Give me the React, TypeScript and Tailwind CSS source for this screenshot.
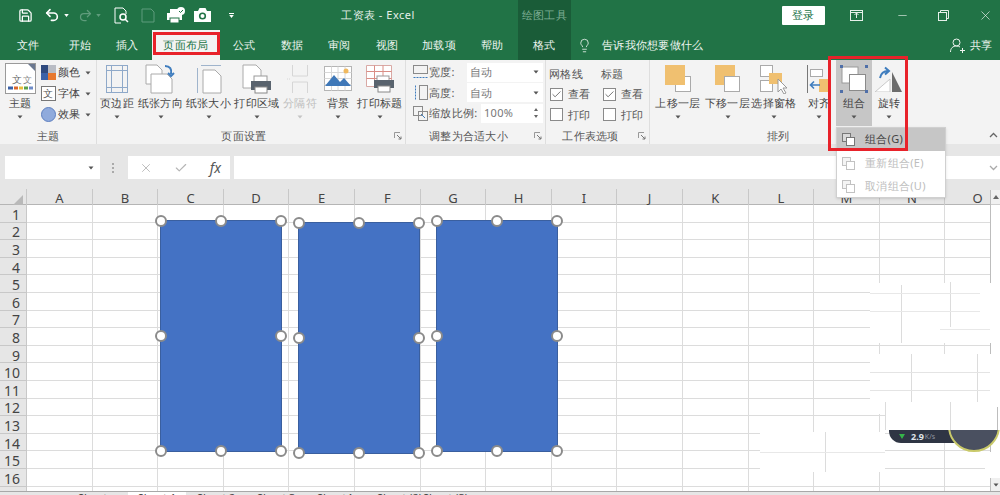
import type { ReactNode } from "react";
import { Save, Undo2, Redo2, Lightbulb, X, Minus, Check } from "lucide-react";

const font = "[font-family:'Noto_Sans_CJK_SC','Liberation_Sans',sans-serif]";
const cols = ["A", "B", "C", "D", "E", "F", "G", "H", "I", "J", "K", "L", "M", "N", "O"];
const rows = Array.from({ length: 17 }, (_, i) => i + 1);

function Caret({ dim = false }: { dim?: boolean }) {
  return (
    <svg width="6" height="4" viewBox="0 0 6 4" className="shrink-0">
      <path d="M0.5 0.5h5L3 3.5z" fill={dim ? "#c4c4c4" : "#555"} />
    </svg>
  );
}

function Launcher() {
  return (
    <svg width="8" height="8" viewBox="0 0 8 8" className="absolute right-[3px] bottom-[4px]">
      <path d="M0.5 6V0.5H6" fill="none" stroke="#999" />
      <path d="M3 3l4 4M7 4.5V7H4.5" fill="none" stroke="#777" />
    </svg>
  );
}

function BigButton({ icon, label, w, dim = false, className = "" }: { icon: ReactNode; label: string; w: string; dim?: boolean; className?: string }) {
  return (
    <div className={"flex flex-col items-center shrink-0 " + w + " " + className}>
      <div className="h-[33px] mt-[2px] flex items-center justify-center">{icon}</div>
      <div className={"h-[16px] leading-[16px] text-[11px] tracking-[0.3px] whitespace-nowrap " + (dim ? "text-[#bdbdbd]" : "text-[#444]")}>{label}</div>
      <div className="mt-[3px] h-[6px] flex items-center"><Caret dim={dim} /></div>
    </div>
  );
}

function Group({ w, label, launcher = false, children }: { w: string; label: string; launcher?: boolean; children: ReactNode }) {
  return (
    <div className={"relative flex flex-col shrink-0 border-r border-[#dedede] " + w}>
      <div className="flex h-[66px]">{children}</div>
      <div className={"flex-1 flex items-center justify-center text-[11px] tracking-[0.3px] text-[#555] leading-none " + (launcher ? "pr-[14px]" : "")}>{label}</div>
      {launcher && <Launcher />}
    </div>
  );
}

function ThemeIcon() {
  return (
    <svg width="31" height="31" viewBox="0 0 31 31">
      <rect x="0.5" y="0.5" width="30" height="30" fill="#fff" stroke="#9a9a9a" />
      <path d="M23 1h7v7z" fill="#6b7890" />
      <text x="7" y="20" fontSize="10" fill="#666">文</text>
      <text x="18" y="20" fontSize="9" fill="#888">文</text>
      <path d="M3 25h5" stroke="#3c62a8" strokeWidth="3" />
      <path d="M9 25h4" stroke="#d9662a" strokeWidth="3" />
      <path d="M14 25h4" stroke="#e8bf3f" strokeWidth="3" />
      <path d="M19 25h4" stroke="#5aa04a" strokeWidth="3" />
      <path d="M24 25h4" stroke="#6e8cc8" strokeWidth="3" />
    </svg>
  );
}

function SmallTheme({ icon, label }: { icon: ReactNode; label: string }) {
  return (
    <div className="h-[21px] flex items-center">
      <div className="w-[16px] h-[16px] flex items-center justify-center">{icon}</div>
      <span className="ml-[2px] text-[11px] tracking-[0.3px] text-[#444] w-[27px]">{label}</span>
      <Caret />
    </div>
  );
}

function MarginIcon() {
  return (
    <svg width="24" height="28" viewBox="0 0 24 28" fill="none" stroke="#8fa9c9">
      <rect x="1.5" y="0.5" width="21" height="27" />
      <path d="M6.5 0.5v27M17.5 0.5v27M1.5 5.5h21M1.5 22.5h21" />
    </svg>
  );
}

function OrientIcon() {
  return (
    <svg width="32" height="30" viewBox="0 0 32 30">
      <path d="M1 1h11l5 5v14H1z" fill="#fff" stroke="#aaa" />
      <path d="M6 10h16l5 5v14H6z" fill="#fff" stroke="#aaa" />
      <path d="M20 2c5 0 7 3 6 8M23 9l3 3 3-3" fill="none" stroke="#3f7dbe" strokeWidth="2" />
    </svg>
  );
}

function SizeIcon() {
  return (
    <svg width="28" height="30" viewBox="0 0 28 30" fill="none">
      <path d="M8 6h12l6 6v17H8z" fill="#fff" stroke="#aaa" />
      <path d="M2.5 4v25M6 1.5h20" stroke="#9fb4cc" />
    </svg>
  );
}

function PrintAreaIcon() {
  return (
    <svg width="30" height="30" viewBox="0 0 30 30">
      <path d="M1 1h13l5 5v18H1z" fill="#fff" stroke="#aaa" />
      <rect x="12" y="12" width="13" height="6" fill="#fff" stroke="#999" />
      <rect x="9" y="17" width="20" height="9" fill="#59636e" />
      <rect x="13" y="23" width="12" height="6" fill="#fff" stroke="#888" />
    </svg>
  );
}

function BreakIcon() {
  return (
    <svg width="26" height="30" viewBox="0 0 26 30" fill="none" stroke="#d6d6d6">
      <path d="M5.5 1v11M20.5 1v11M5.5 18v11M20.5 18v11M5.5 12h15M5.5 18h15" />
      <path d="M0 15h3" strokeDasharray="1 1" />
    </svg>
  );
}

function BackgroundIcon() {
  return (
    <svg width="28" height="25" viewBox="0 0 28 25">
      <rect x="0.5" y="0.5" width="27" height="24" fill="#fff" stroke="#b5b5b5" />
      <path d="M0.5 6.5h27M0.5 12.5h27M0.5 18.5h27M7.5 0.5v24M14 0.5v24M21 0.5v24" stroke="#d8d8d8" />
      <circle cx="22" cy="5" r="2.5" fill="#f0b95f" />
      <path d="M1 20l9-11 6 7 4-4 7 8z" fill="#3f78b8" />
    </svg>
  );
}

function PrintTitleIcon() {
  return (
    <svg width="28" height="28" viewBox="0 0 28 28">
      <path d="M0.5 0.5h25v21h-25z" fill="#fff" stroke="#d9a9a5" />
      <path d="M0.5 6.5h25M0.5 13.5h25M8.5 0.5v21M17 0.5v21" stroke="#d98e86" />
      <rect x="11" y="11" width="12" height="6" fill="#fff" stroke="#999" />
      <rect x="8" y="15" width="20" height="8" fill="#59636e" />
      <rect x="12" y="21" width="12" height="6" fill="#fff" stroke="#888" />
    </svg>
  );
}

function ForwardIcon({ top }: { top: "orange" | "white" }) {
  return (
    <svg width="26" height="28" viewBox="0 0 26 28">
      {top === "orange" ? (
        <>
          <rect x="10.5" y="11.5" width="15" height="15" fill="#fff" stroke="#aaa" />
          <rect x="0" y="0" width="20" height="20" fill="#f0c070" />
        </>
      ) : (
        <>
          <rect x="0" y="0" width="20" height="20" fill="#f0c070" />
          <rect x="9.5" y="11.5" width="15" height="15" fill="#fff" stroke="#aaa" />
        </>
      )}
    </svg>
  );
}

function PaneIcon() {
  return (
    <svg width="28" height="30" viewBox="0 0 28 30">
      <rect x="0.5" y="1.5" width="12" height="11" fill="#fff" stroke="#aaa" />
      <rect x="0.5" y="16.5" width="12" height="11" fill="#fff" stroke="#aaa" />
      <rect x="9" y="9" width="13" height="11" fill="#f0c070" />
      <path d="M18 15v13l3-3 3 5 2-1-3-5h4z" fill="#fff" stroke="#999" />
    </svg>
  );
}

function AlignIcon() {
  return (
    <svg width="26" height="28" viewBox="0 0 26 28">
      <path d="M1.5 0v28" stroke="#777" />
      <rect x="4.5" y="4.5" width="12" height="7" fill="#fff" stroke="#aaa" />
      <rect x="13" y="14" width="12" height="13" fill="#f0c070" />
      <path d="M14 20H5M8 16.5L4.5 20 8 23.5" fill="none" stroke="#3f7dbe" strokeWidth="1.6" />
    </svg>
  );
}

function GroupIcon() {
  return (
    <svg width="28" height="28" viewBox="0 0 28 28">
      <rect x="2" y="2" width="16" height="16" fill="#fff" stroke="#9a9a9a" />
      <rect x="9.5" y="9.5" width="16" height="16" fill="#fff" stroke="#8a8a8a" />
      <g fill="#4f6fa8">
        <rect x="0" y="0" width="3" height="3" />
        <rect x="25" y="0" width="3" height="3" />
        <rect x="0" y="25" width="3" height="3" />
        <rect x="25" y="25" width="3" height="3" />
      </g>
    </svg>
  );
}

function RotateIcon() {
  return (
    <svg width="28" height="27" viewBox="0 0 28 27">
      <path d="M17 7v20h10z" fill="#6c6c6c" />
      <path d="M0 27l15-13v13z" fill="#fff" stroke="#c9c9c9" />
      <path d="M5 13c1-5 4-7 8-7M10 2.5L14 6l-4 3.5" fill="none" stroke="#3f7dbe" strokeWidth="2" />
    </svg>
  );
}

function SizeRow({ icon, label, value, spin = false, labelW, fieldW }: { icon: ReactNode; label: string; value: string; spin?: boolean; labelW: string; fieldW: string }) {
  return (
    <div className="h-[20.5px] flex items-center pl-[6px]">
      <div className="w-[16px] h-[16px] flex items-center justify-center shrink-0">{icon}</div>
      <span className={"ml-[1px] text-[11px] tracking-[0.3px] text-[#555] whitespace-nowrap " + labelW}>{label}</span>
      <div className={"h-[19px] bg-white flex items-center justify-between pl-[3px] pr-[4px] text-[11px] tracking-[0.3px] text-[#777] " + fieldW}>
        <span>{value}</span>
        {spin ? (
          <svg width="6" height="12" viewBox="0 0 6 12"><path d="M3 1l2 3H1zM3 11L1 8h4z" fill="#666" /></svg>
        ) : (
          <Caret />
        )}
      </div>
    </div>
  );
}

function CheckRow({ label, on }: { label: string; on: boolean }) {
  return (
    <div className="h-[20.5px] flex items-center">
      <div className="w-[13px] h-[13px] bg-white border border-[#8a8a8a] flex items-center justify-center">
        {on && <Check size={11} strokeWidth={1.6} color="#444" />}
      </div>
      <span className="ml-[5px] text-[11px] tracking-[0.3px] text-[#555]">{label}</span>
    </div>
  );
}

function Handle({ pos }: { pos: string }) {
  return <div className={"absolute w-[12px] h-[12px] rounded-full bg-white border-2 border-[#8b8b8b] " + pos} />;
}

function Shape({ pos }: { pos: string }) {
  return (
    <div className={"absolute w-[122px] h-[232px] bg-[#4472c4] border border-[#3a5f9f] " + pos}>
      <Handle pos="-left-[6px] -top-[6px]" />
      <Handle pos="left-[54px] -top-[6px]" />
      <Handle pos="-right-[6px] -top-[6px]" />
      <Handle pos="-left-[6px] top-[109px]" />
      <Handle pos="-right-[6px] top-[109px]" />
      <Handle pos="-left-[6px] -bottom-[6px]" />
      <Handle pos="left-[54px] -bottom-[6px]" />
      <Handle pos="-right-[6px] -bottom-[6px]" />
    </div>
  );
}

function MenuIcon({ dim = false }: { dim?: boolean }) {
  const c = dim ? "#c2c2c2" : "#777";
  return (
    <svg width="15" height="15" viewBox="0 0 15 15" fill="none" stroke={c}>
      <rect x="1.5" y="1.5" width="8" height="8" fill={dim ? "#f4f4f4" : "#d8d8d8"} />
      <rect x="5.5" y="5.5" width="8" height="8" fill="#fff" />
    </svg>
  );
}

export default function App() {
  return (
    <div className={"relative w-[1000px] h-[495px] overflow-hidden bg-white flex flex-col " + font}>
      {/* title bar */}
      <div className="h-[30px] bg-[#217346] flex items-center text-white shrink-0">
        <Save size={15} strokeWidth={2} className="ml-[18px]" />
        <Undo2 size={16} strokeWidth={2.4} className="ml-[11px]" />
        <div className="ml-[4px]"><svg width="5" height="3" viewBox="0 0 6 4"><path d="M0 0h6L3 4z" fill="#fff" /></svg></div>
        <Redo2 size={15} strokeWidth={2} color="#5f9c7c" className="ml-[9px]" />
        <div className="ml-[3px]"><svg width="5" height="3" viewBox="0 0 6 4"><path d="M0 0h6L3 4z" fill="#5f9c7c" /></svg></div>
        <svg width="15" height="17" viewBox="0 0 15 17" fill="none" stroke="#fff" className="ml-[13px]">
          <path d="M1 1h8l3 3v3M1 1v15h6" />
          <circle cx="9" cy="10" r="3" strokeWidth="1.5" />
          <path d="M11 12l3 3" strokeWidth="1.5" />
        </svg>
        <svg width="14" height="16" viewBox="0 0 14 16" fill="none" stroke="#5f9c7c" className="ml-[12px]">
          <path d="M1 2h9l3 3v10H1z" />
        </svg>
        <svg width="18" height="16" viewBox="0 0 18 16" className="ml-[12px]">
          <rect x="0" y="6" width="15" height="7" fill="#fff" />
          <rect x="3" y="2" width="8" height="4" fill="#fff" />
          <rect x="3" y="11" width="9" height="5" fill="#fff" stroke="#217346" />
          <circle cx="14" cy="4" r="4" fill="#fff" />
          <path d="M12 4l1.5 1.5L16 3" fill="none" stroke="#217346" />
        </svg>
        <svg width="17" height="14" viewBox="0 0 17 14" className="ml-[9px]">
          <path d="M0 3h4l1.5-3h6L13 3h4v11H0z" fill="#fff" />
          <circle cx="8.5" cy="8" r="3.6" fill="#217346" />
          <circle cx="8.5" cy="8" r="2" fill="#fff" />
        </svg>
        <div className="ml-[18px] flex flex-col items-center gap-[1px]">
          <div className="w-[5px] h-[1px] bg-white" />
          <svg width="5" height="3" viewBox="0 0 6 4"><path d="M0 0h6L3 4z" fill="#fff" /></svg>
        </div>
        <span className="ml-[107px] w-[79px] text-[11px] tracking-[0.5px] text-[#e6f0ea] whitespace-nowrap">工资表 - Excel</span>
        <div className="ml-[98px] w-[53px] h-full bg-[#1a5c38] flex items-center justify-center text-[11px] tracking-[0.3px] text-[#7fae95]">绘图工具</div>
        <div className="ml-[211px] w-[43px] h-[19px] bg-white rounded-[1px] flex items-center justify-center text-[11px] tracking-[0.3px] text-[#217346]">登录</div>
        <svg width="13" height="11" viewBox="0 0 13 11" fill="none" stroke="#e6f0ea" className="ml-[25px]">
          <rect x="0.5" y="0.5" width="12" height="10" />
          <path d="M6.5 8V3M4.5 5l2-2 2 2M0.5 2.5h12" />
        </svg>
        <Minus size={13} strokeWidth={1.2} color="#e6f0ea" className="ml-[33px]" />
        <svg width="11" height="11" viewBox="0 0 11 11" fill="none" stroke="#e6f0ea" className="ml-[29px]">
          <rect x="0.5" y="2.5" width="8" height="8" />
          <path d="M2.5 2.5v-2h8v8h-2" />
        </svg>
        <X size={15} strokeWidth={1.1} color="#e6f0ea" className="ml-[29px]" />
      </div>

      {/* tabs */}
      <div className="h-[30px] bg-[#217346] flex text-[11px] tracking-[0.3px] text-[#eef5f0] shrink-0">
        <div className="w-[57px] flex items-center justify-center">文件</div>
        <div className="w-[46px] flex items-center justify-center">开始</div>
        <div className="w-[49px] flex items-center justify-center">插入</div>
        <div className="w-[68px] flex items-center justify-center bg-[#f3f3f3] text-[#217346]">页面布局</div>
        <div className="w-[49px] flex items-center justify-center">公式</div>
        <div className="w-[47px] flex items-center justify-center">数据</div>
        <div className="w-[47px] flex items-center justify-center">审阅</div>
        <div className="w-[48px] flex items-center justify-center">视图</div>
        <div className="w-[56px] flex items-center justify-center">加载项</div>
        <div className="w-[51px] flex items-center justify-center">帮助</div>
        <div className="w-[53px] flex items-center justify-center bg-[#1a5c38]">格式</div>
        <Lightbulb size={15} strokeWidth={1.3} className="ml-[6px] self-center" />
        <span className="ml-[10px] self-center whitespace-nowrap">告诉我你想要做什么</span>
        <svg width="15" height="15" viewBox="0 0 15 15" fill="none" stroke="#eef5f0" className="ml-[246px] self-center">
          <circle cx="6.5" cy="4.5" r="3.5" />
          <path d="M0.5 14c0-4 2.5-6 6-6 1.5 0 2.5.4 3.5 1M10 12.5h5M12.5 10v5" />
        </svg>
        <span className="ml-[5px] self-center">共享</span>
      </div>

      {/* ribbon */}
      <div className="relative h-[84px] bg-[#f3f3f3] flex shrink-0">
        <Group w="w-[97px]" label="主题">
          <BigButton w="w-[40px]" label="主题" icon={<ThemeIcon />} />
          <div className="pt-[2px]">
            <SmallTheme
              label="颜色"
              icon={
                <div className="grid grid-cols-2 grid-rows-2 w-[15px] h-[15px]">
                  <div className="bg-[#2f4a7f]" />
                  <div className="bg-[#b9bcc4]" />
                  <div className="bg-[#3c62a8]" />
                  <div className="bg-[#e8782e]" />
                </div>
              }
            />
            <SmallTheme
              label="字体"
              icon={<div className="w-[15px] h-[15px] bg-white border border-[#777] text-[10px] leading-[13px] text-center text-[#555]">文</div>}
            />
            <SmallTheme label="效果" icon={<div className="w-[15px] h-[15px] rounded-full bg-[#8faadc] border border-[#5d7fc0]" />} />
          </div>
        </Group>

        <Group w="w-[309px]" label="页面设置" launcher>
          <BigButton w="w-[40px]" label="页边距" icon={<MarginIcon />} />
          <BigButton w="w-[47px]" label="纸张方向" icon={<OrientIcon />} />
          <BigButton w="w-[49px]" label="纸张大小" icon={<SizeIcon />} />
          <BigButton w="w-[48px]" label="打印区域" icon={<PrintAreaIcon />} />
          <BigButton w="w-[38px]" label="分隔符" dim icon={<BreakIcon />} />
          <BigButton w="w-[38px]" label="背景" icon={<BackgroundIcon />} />
          <BigButton w="w-[46px]" label="打印标题" icon={<PrintTitleIcon />} />
        </Group>

        <Group w="w-[140px]" label="调整为合适大小" launcher>
          <div className="pt-[2px]">
            <SizeRow
              label="宽度:"
              labelW="w-[38px]"
              fieldW="w-[76px]"
              value="自动"
              icon={
                <svg width="15" height="15" viewBox="0 0 15 15" fill="none" stroke="#8a8a8a">
                  <rect x="0.5" y="0.5" width="14" height="8" />
                  <path d="M0.5 12.5h14" stroke="#3f7dbe" strokeDasharray="2 1" />
                </svg>
              }
            />
            <SizeRow
              label="高度:"
              labelW="w-[38px]"
              fieldW="w-[76px]"
              value="自动"
              icon={
                <svg width="15" height="15" viewBox="0 0 15 15" fill="none" stroke="#8a8a8a">
                  <rect x="6.5" y="0.5" width="8" height="14" />
                  <path d="M2.5 0.5v14" stroke="#3f7dbe" strokeDasharray="2 1" />
                </svg>
              }
            />
            <SizeRow
              label="缩放比例:"
              labelW="w-[52px]"
              fieldW="w-[62px]"
              value="100%"
              spin
              icon={
                <svg width="15" height="15" viewBox="0 0 15 15" fill="none" stroke="#8a8a8a">
                  <rect x="0.5" y="0.5" width="9" height="9" />
                  <rect x="5.5" y="5.5" width="9" height="9" />
                  <path d="M8 8l4 4" stroke="#3f7dbe" />
                </svg>
              }
            />
          </div>
        </Group>

        <Group w="w-[104px]" label="工作表选项" launcher>
          <div className="pl-[4px] w-[55px] text-[11px] tracking-[0.3px] text-[#555]">
            <div className="h-[24px] leading-[28px] -ml-[1px]">网格线</div>
            <CheckRow label="查看" on />
            <CheckRow label="打印" on={false} />
          </div>
          <div className="pl-[2px] text-[11px] tracking-[0.3px] text-[#555]">
            <div className="h-[24px] leading-[28px] -ml-[2px]">标题</div>
            <CheckRow label="查看" on />
            <CheckRow label="打印" on={false} />
          </div>
        </Group>

        <Group w="w-[258px]" label="排列">
          <div className="w-[2px] shrink-0" />
          <BigButton w="w-[52px]" label="上移一层" icon={<ForwardIcon top="orange" />} />
          <BigButton w="w-[47px]" label="下移一层" icon={<ForwardIcon top="white" />} />
          <BigButton w="w-[46px]" label="选择窗格" icon={<PaneIcon />} />
          <BigButton w="w-[32px]" className="ml-[6px]" label="对齐" icon={<AlignIcon />} />
          <BigButton w="w-[36px]" className="ml-[1px] bg-[#c6c6c6]" label="组合" icon={<GroupIcon />} />
          <BigButton w="w-[34px]" label="旋转" icon={<RotateIcon />} />
        </Group>

        <svg width="9" height="6" viewBox="0 0 9 6" fill="none" stroke="#666" strokeWidth="1.3" className="absolute right-[2px] bottom-[6px]">
          <path d="M1 5l3.5-3.5L8 5" />
        </svg>
      </div>

      {/* formula bar */}
      <div className="h-[45px] bg-[#e6e6e6] flex items-center pt-[2px] shrink-0">
        <div className="ml-[5px] w-[95px] h-[23px] bg-white flex items-center justify-end pr-[6px]"><Caret /></div>
        <div className="ml-[12px] flex flex-col gap-[2px]">
          <div className="w-[2px] h-[2px] bg-[#aaa]" />
          <div className="w-[2px] h-[2px] bg-[#aaa]" />
          <div className="w-[2px] h-[2px] bg-[#aaa]" />
        </div>
        <div className="ml-[14px] w-[102px] h-[23px] bg-white flex items-center justify-between pl-[11px] pr-[9px]">
          <X size={14} strokeWidth={1.5} color="#b5b5b5" />
          <Check size={14} strokeWidth={2} color="#b5b5b5" />
          <span className="font-['Liberation_Serif',serif] italic text-[14px] text-[#555]">fx</span>
        </div>
        <div className="ml-[4px] flex-1 h-[23px] bg-white flex items-center justify-end pr-[2px]">
          <svg width="9" height="6" viewBox="0 0 9 6" fill="none" stroke="#aaa" strokeWidth="1.3"><path d="M1 1l3.5 3.5L8 1" /></svg>
        </div>
      </div>

      <div className="relative flex-1 flex flex-col overflow-hidden font-['Liberation_Sans',sans-serif]">
        {/* column header */}
        <div className="h-[16px] grid grid-cols-[27px_repeat(15,65.6px)] bg-[#e6e6e6] border-b border-[#b5b5b5] shrink-0 text-[13px] text-[#444]">
          <div className="flex items-end justify-end pr-[3px] pb-[2px] border-r border-[#c8c8c8]">
            <svg width="12" height="12" viewBox="0 0 12 12"><path d="M12 0v12H0z" fill="#b9b9b9" /></svg>
          </div>
          {cols.map((c) => (
            <div key={c} className="flex items-center justify-center border-r border-[#c8c8c8]">{c}</div>
          ))}
        </div>

        {/* sheet */}
        <div className="grid grid-cols-[27px_repeat(15,65.6px)] auto-rows-[17.6px]">
          {rows.map((r) => [
            <div key={"h" + r} className="bg-[#e6e6e6] border-r border-b border-[#c8c8c8] flex items-center justify-end pr-[6px] pt-[2px] text-[14px] text-[#444]">{r < 17 ? r : ""}</div>,
            ...cols.map((c) => <div key={c + r} className="border-r border-b border-[#dcdcdc]" />),
          ])}
        </div>

        {/* vertical scrollbar */}
        <div className="absolute left-[990px] top-[1px] h-[302px] w-[10px] bg-white border-l border-[#bdbdbd] flex flex-col justify-between">
          <div className="h-[15px] bg-[#f0f0f0] border-b border-[#cfcfcf] flex items-center justify-center"><svg width="6" height="4" viewBox="0 0 6 4"><path d="M3 0l3 4H0z" fill="#666" /></svg></div>
          <div className="h-[14px] bg-[#f0f0f0] flex items-center justify-center"><Caret /></div>
        </div>

        {/* things lying over the cells, placed from the first row's top edge */}
        <div className="absolute left-0 right-0 top-[16px] bottom-0">
          {/* smudged out area on the right of the sheet */}
          <div className="absolute left-[870px] top-[78px] w-[130px] h-[60px] bg-white" />
          <div className="absolute left-[901px] top-[80px] w-[1px] h-[58px] bg-[#dcdcdc]" />
          <div className="absolute left-[950px] top-[77px] w-[1px] h-[45px] bg-[#dcdcdc]" />
          <div className="absolute left-[870px] top-[88px] w-[110px] h-[1px] bg-[#e8e8e8]" />
          <div className="absolute left-[870px] top-[106px] w-[110px] h-[1px] bg-[#e8e8e8]" />
          <div className="absolute left-[940px] top-[124px] w-[50px] h-[1px] bg-[#e8e8e8]" />
          <div className="absolute left-[870px] top-[149px] w-[130px] h-[60px] bg-white" />
          <div className="absolute left-[911px] top-[149px] w-[1px] h-[48px] bg-[#dcdcdc]" />
          <div className="absolute left-[977px] top-[149px] w-[1px] h-[48px] bg-[#dcdcdc]" />
          <div className="absolute left-[870px] top-[167px] w-[120px] h-[1px] bg-[#e4e4e4]" />
          <div className="absolute left-[870px] top-[185px] w-[120px] h-[1px] bg-[#e4e4e4]" />
          <div className="absolute left-[885px] top-[209px] w-[115px] h-[16px] bg-white" />
          <div className="absolute left-[885px] top-[197px] w-[1px] h-[28px] bg-[#dcdcdc]" />
          <div className="absolute left-[950px] top-[197px] w-[1px] h-[28px] bg-[#dcdcdc]" />
          <div className="absolute left-[997px] top-[202px] w-[1px] h-[23px] bg-[#bdbdbd]" />
          <div className="absolute left-[760px] top-[227px] w-[125px] h-[40px] bg-white" />
          <div className="absolute left-[825px] top-[227px] w-[1px] h-[40px] bg-[#dcdcdc]" />
          <div className="absolute left-[760px] top-[247px] w-[125px] h-[1px] bg-[#e8e8e8]" />
          <div className="absolute left-[985px] top-[247px] w-[15px] h-[26px] bg-white" />

          {/* network speed widget */}
          <div className="absolute left-[889px] top-[225px] w-[111px] h-[23px] overflow-hidden">
            <div className="w-[70px] h-[13px] bg-[#2f3544] rounded-bl-[12px] flex items-center pl-[10px] text-[9px] leading-none text-[#dfe3ea] font-bold">
              <svg width="6" height="5" viewBox="0 0 6 5" className="mr-[6px]"><path d="M0 0h6L3 5z" fill="#35b34a" /></svg>
              2.9<span className="ml-[1px] text-[7px] font-normal text-[#8f96a3]">K/s</span>
            </div>
            <div className="absolute left-[59px] -top-[30px] w-[52px] h-[52px] rounded-full bg-[#4a5060] border-2 border-[#c9c96a]" />
          </div>

          <Shape pos="left-[160px] top-[15px]" />
          <Shape pos="left-[298px] top-[17px]" />
          <Shape pos="left-[436px] top-[14.5px]" />

          {/* sheet tabs, mostly cut off by the bottom of the picture */}
          <div className="absolute left-0 right-0 bottom-0 h-[4px] bg-[#e6e6e6] border-t border-[#a8a8a8] overflow-hidden flex text-[11px] leading-[12px] text-[#444]">
            <div className="ml-[78px] w-[50px]">Sheet</div>
            <div className="w-[58px] bg-white text-center">Sheet 1</div>
            <div className="ml-[11px] w-[60px]">Sheet 2</div>
            <div className="w-[60px]">Sheet 3</div>
            <div className="w-[60px]">Sheet4</div>
            <div className="w-[46px]">Sheet (2)</div>
            <div className="w-[46px]">Sheet (3)</div>
          </div>
        </div>
      </div>

      {/* group dropdown */}
      <div className="absolute left-[836px] top-[127px] w-[110px] h-[71px] bg-white border border-[#d0d0d0] shadow-sm text-[11px] tracking-[0.3px]">
        <div className="h-[23px] bg-[#c6c6c6] flex items-center pl-[4px] text-[#444]"><MenuIcon /><span className="ml-[9px]">组合(G)</span></div>
        <div className="h-[23px] mt-[1px] flex items-center pl-[4px] text-[#bdbdbd]"><MenuIcon dim /><span className="ml-[9px]">重新组合(E)</span></div>
        <div className="h-[23px] flex items-center pl-[4px] text-[#bdbdbd]"><MenuIcon dim /><span className="ml-[9px]">取消组合(U)</span></div>
      </div>

      {/* red annotation boxes */}
      <div className="absolute left-[153px] top-[32px] w-[67px] h-[23px] border-[3px] border-[#e8222a]" />
      <div className="absolute left-[828px] top-[56px] w-[80px] h-[95px] border-[3px] border-[#e8222a]" />
    </div>
  );
}
